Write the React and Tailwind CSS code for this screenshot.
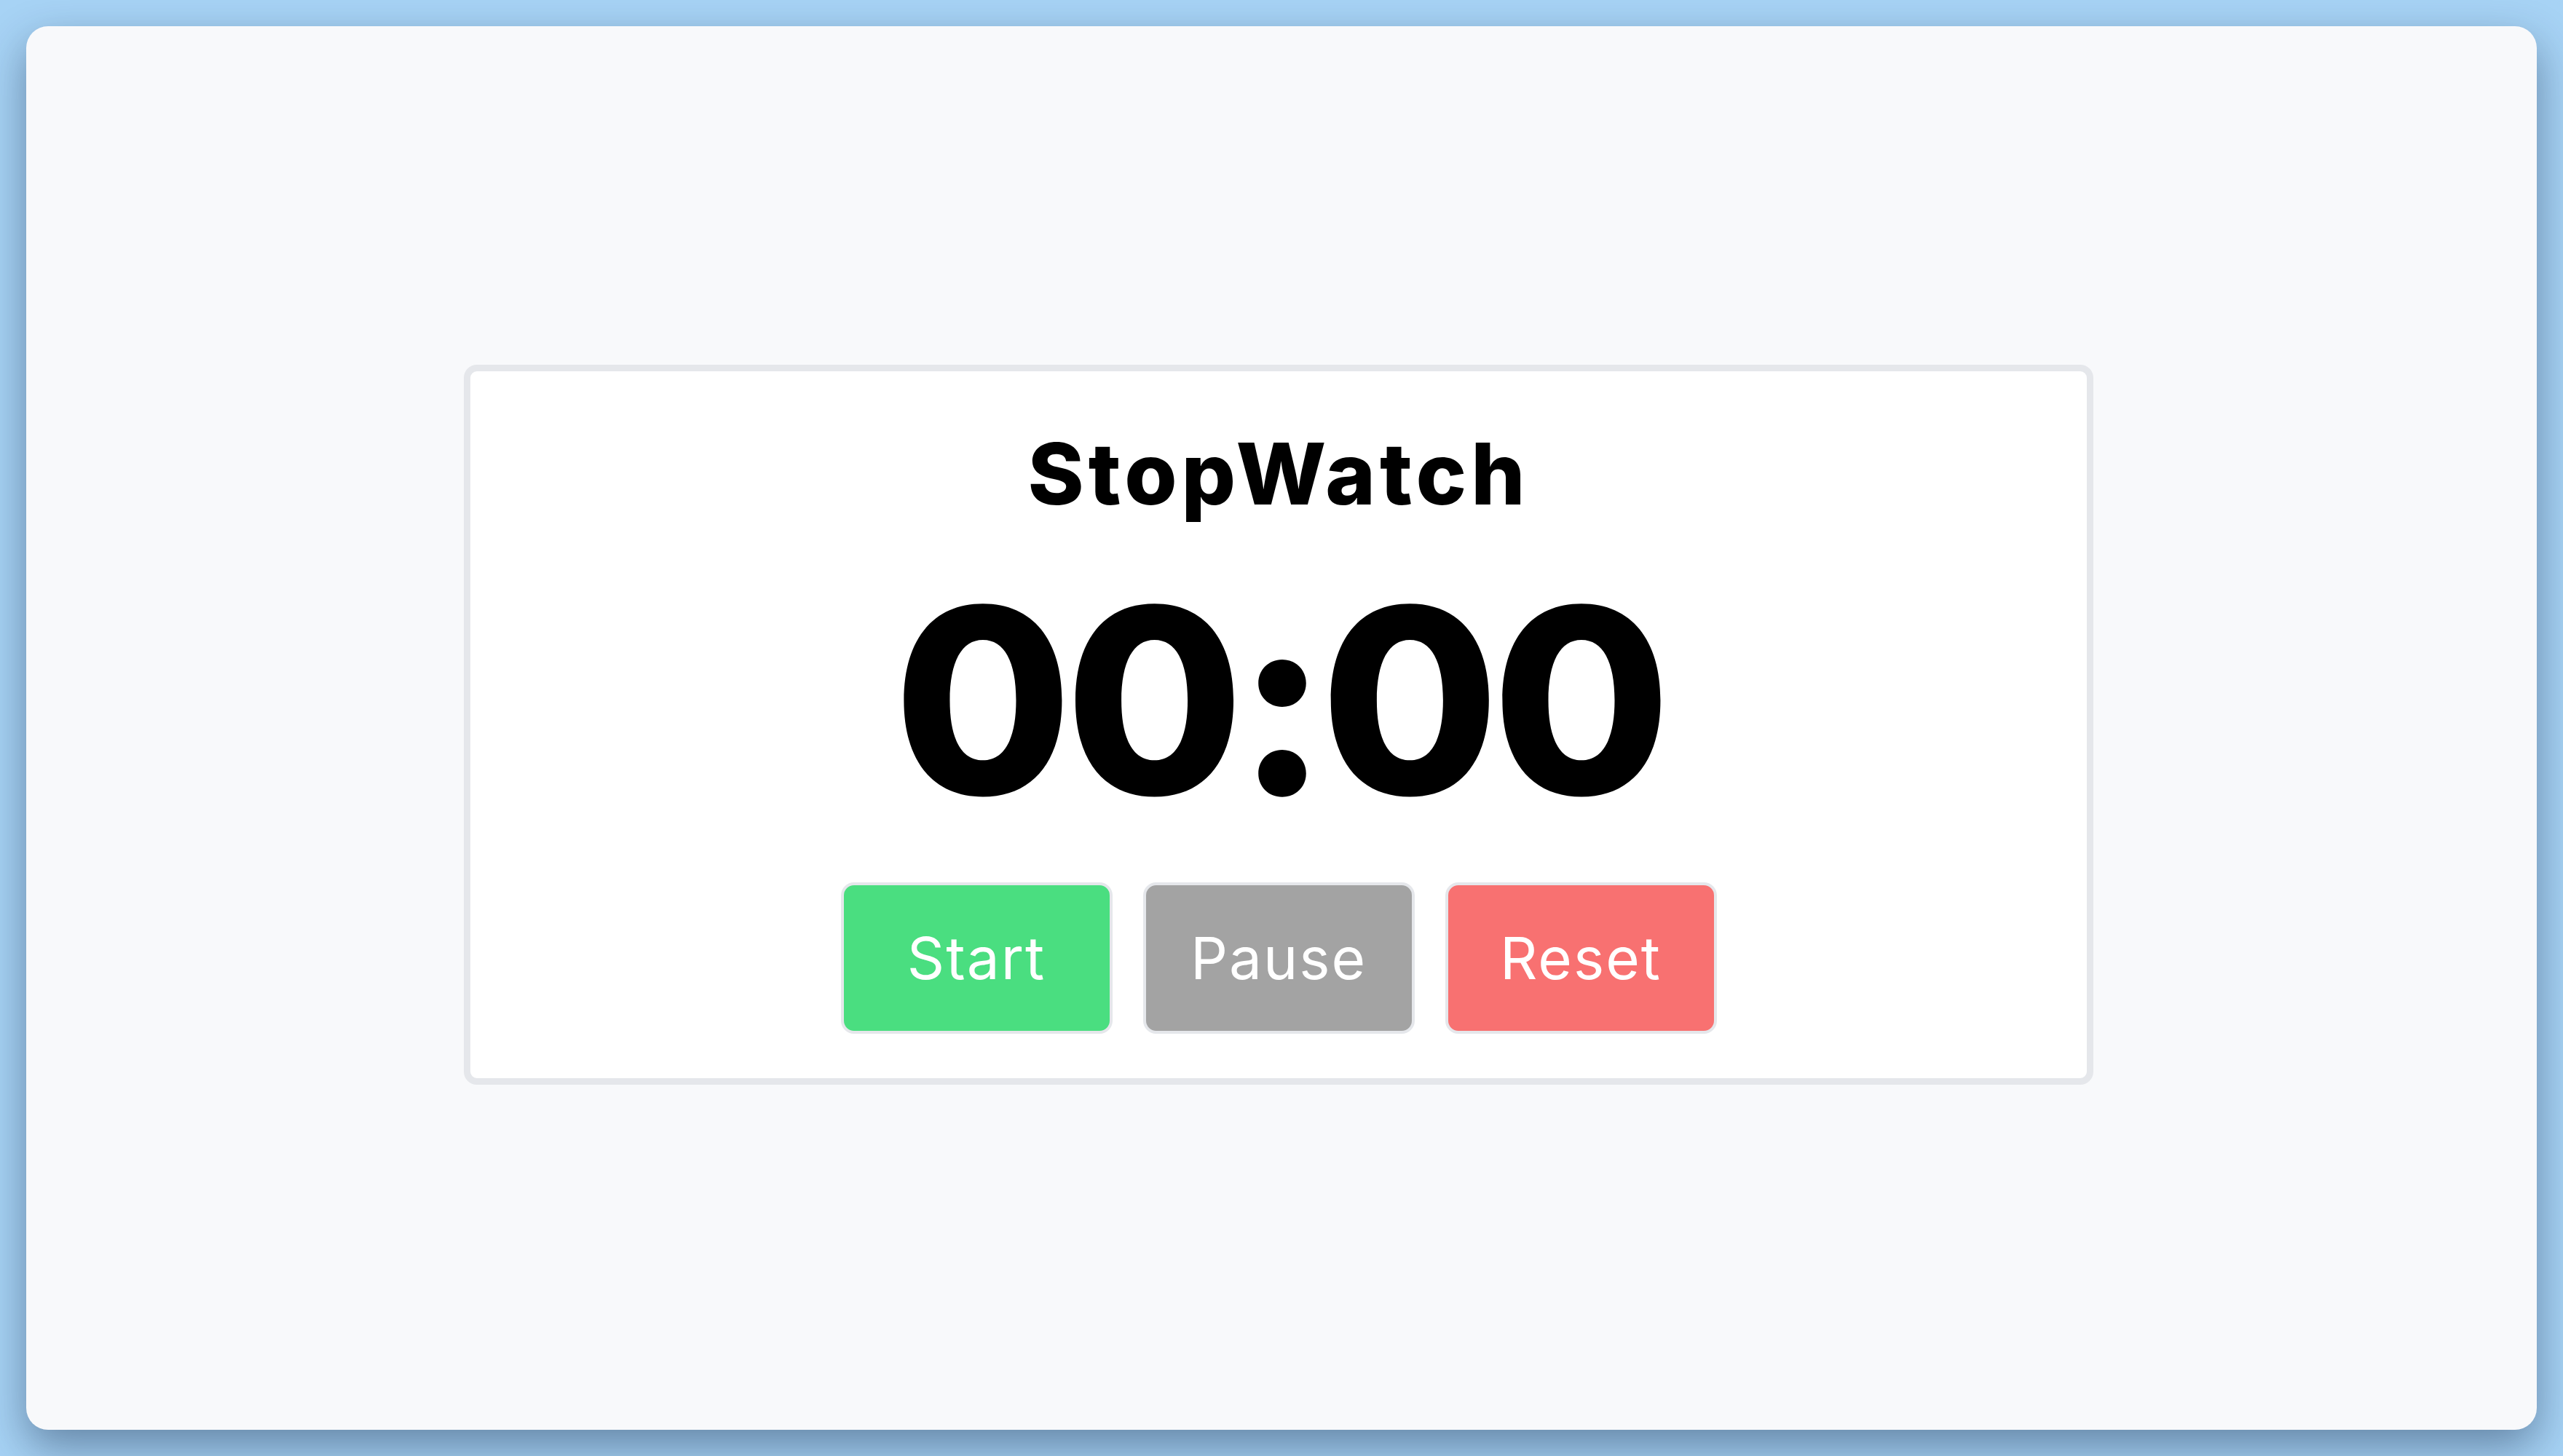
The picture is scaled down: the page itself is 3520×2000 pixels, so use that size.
export default function App() {
  const font = { fontFamily: "Inter, 'Noto Sans', sans-serif" };
  return (
    <div className="w-[3520px] h-[2000px] bg-[#a7d3f5] pt-[36px] pl-[36px] pr-[36px] pb-[36px]" style={font}>
      <div className="w-full h-full rounded-[30px] bg-[#f8f9fb] shadow-[0_24px_60px_rgba(20,40,70,0.45)] flex items-center justify-center pr-[8px] pb-[10px]">
        <div className="w-[2238px] border-[9px] border-[#e5e7eb] rounded-[18px] bg-white flex flex-col items-center pt-[82px] pb-[61px]">
          <h1 className="text-[117px] leading-none font-extrabold text-black tracking-[6px]">StopWatch</h1>
          <div className="mt-[76px] text-[355px] leading-none font-extrabold text-black tracking-[-10px]">00:00</div>
          <div className="mt-[72px] flex gap-[42px]">
            <button className="w-[373px] h-[208px] rounded-[18px] border-[4px] border-[#e5e7eb] bg-[#4ade80] text-white text-[80px] leading-none font-normal tracking-[2px]">Start</button>
            <button className="w-[373px] h-[208px] rounded-[18px] border-[4px] border-[#e5e7eb] bg-[#a3a3a3] text-white text-[80px] leading-none font-normal tracking-[2px]">Pause</button>
            <button className="w-[373px] h-[208px] rounded-[18px] border-[4px] border-[#e5e7eb] bg-[#f87171] text-white text-[80px] leading-none font-normal tracking-[2px]">Reset</button>
          </div>
        </div>
      </div>
    </div>
  );
}
